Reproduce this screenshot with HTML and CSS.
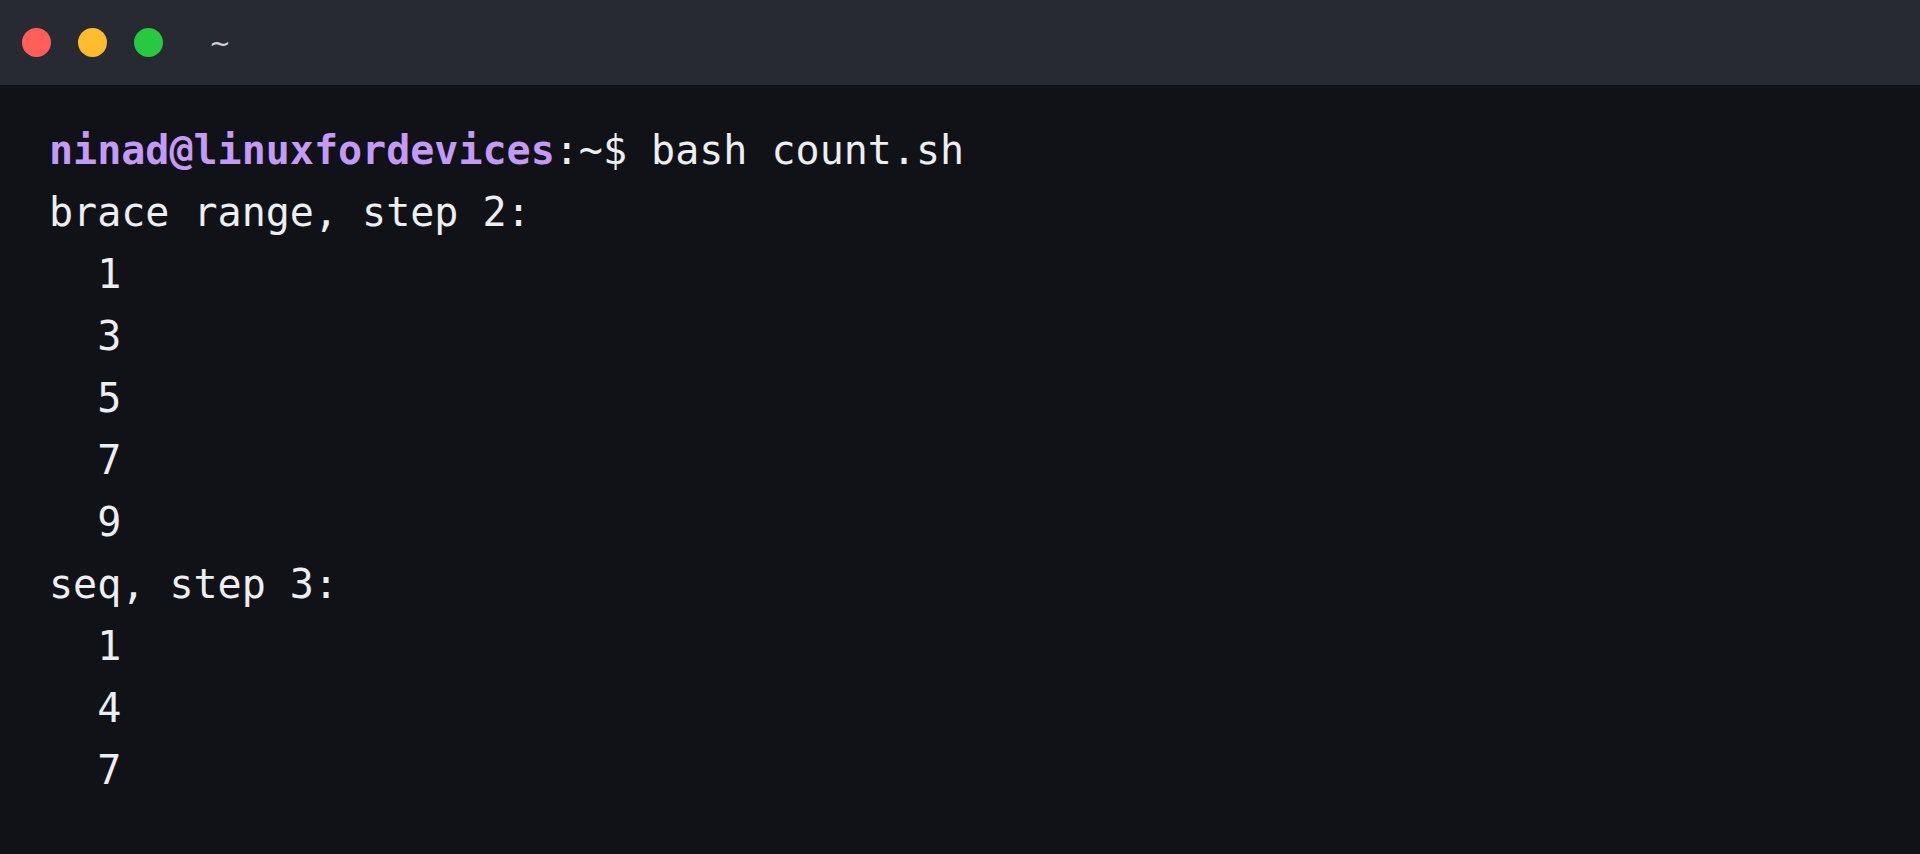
FILE: index.html
```html
<!DOCTYPE html>
<html lang="en">
<head>
<meta charset="utf-8">
<title>Terminal</title>
<link rel="stylesheet" href="styles.css">
</head>
<body>
<div class="window">
  <header class="titlebar">
    <span class="dot red"></span>
    <span class="dot yellow"></span>
    <span class="dot green"></span>
    <span class="title">~</span>
  </header>
  <main class="term">
    <div class="line"><span class="prompt">ninad@linuxfordevices</span>:~$ bash count.sh</div>
    <div class="line">brace range, step 2:</div>
    <div class="line">  1</div>
    <div class="line">  3</div>
    <div class="line">  5</div>
    <div class="line">  7</div>
    <div class="line">  9</div>
    <div class="line">seq, step 3:</div>
    <div class="line">  1</div>
    <div class="line">  4</div>
    <div class="line">  7</div>
  </main>
</div>
</body>
</html>
```
FILE: styles.css
```css
html, body {
  margin: 0;
  padding: 0;
  height: 100%;
  background: #111217;
}
.window {
  display: flex;
  flex-direction: column;
  height: 100%;
}
.titlebar {
  height: 85px;
  flex: 0 0 85px;
  background: #272a33;
  display: flex;
  align-items: center;
  padding-left: 22px;
  gap: 27px;
  box-sizing: border-box;
}
.dot {
  width: 29px;
  height: 29px;
  border-radius: 50%;
  display: block;
}
.red { background: #ff5f57; }
.yellow { background: #febc2e; }
.green { background: #28c840; }
.title {
  margin-left: 19px;
  font-family: "DejaVu Sans", sans-serif;
  font-size: 26px;
  color: #d0d3da;
  line-height: 1;
}
.term {
  flex: 1;
  padding: 34px 0 0 49px;
  font-family: "DejaVu Sans Mono", monospace;
  font-size: 40px;
  line-height: 62px;
  color: #eceef2;
}
.line {
  white-space: pre;
}
.prompt {
  color: #c39af8;
  font-weight: bold;
}
```
